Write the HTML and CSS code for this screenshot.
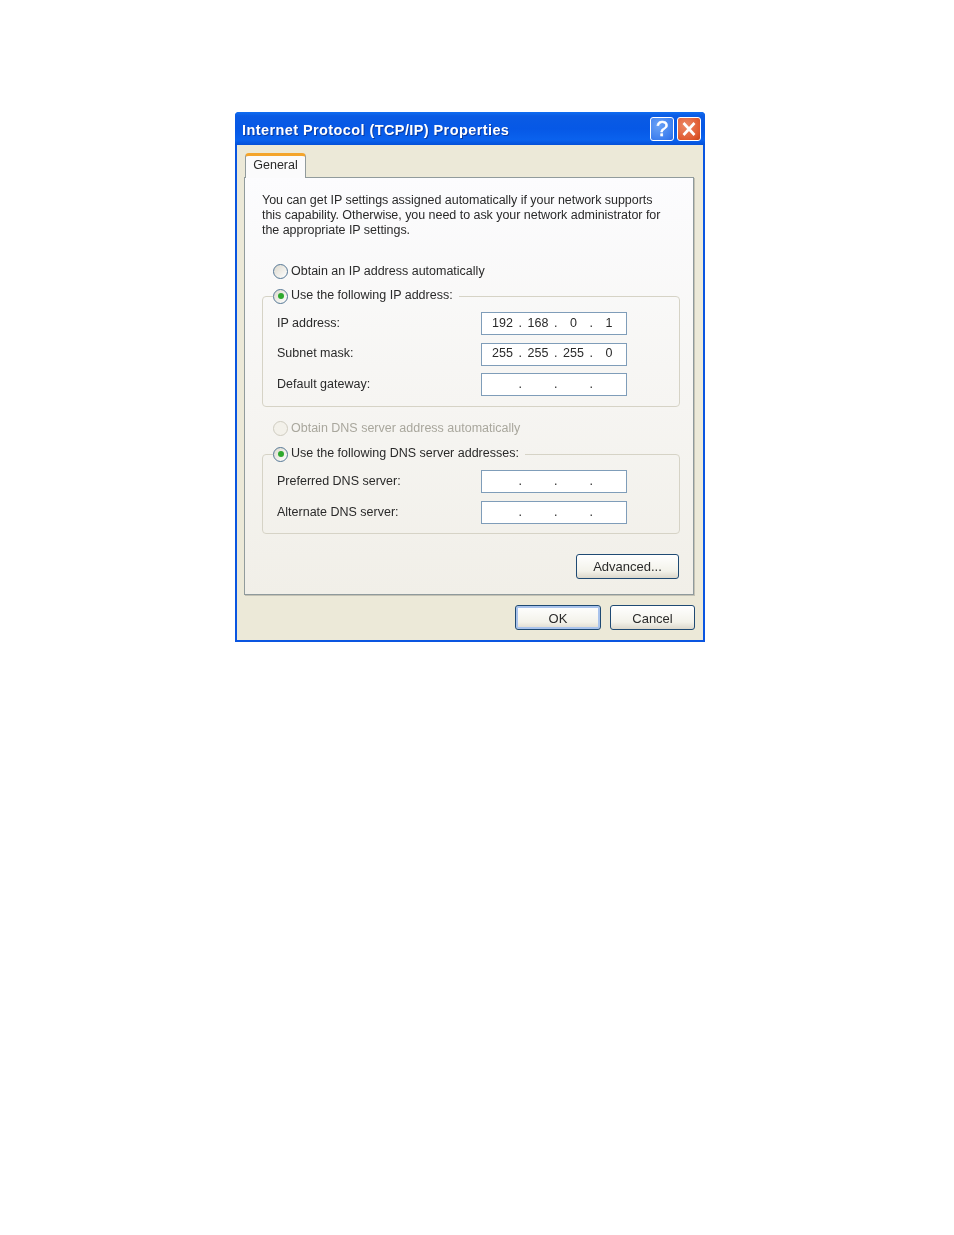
FILE: index.html
```html
<!DOCTYPE html>
<html lang="en">
<head>
<meta charset="utf-8">
<title>Internet Protocol (TCP/IP) Properties</title>
<link rel="stylesheet" href="styles.css">
</head>
<body>
<div class="window">
  <div class="titlebar">
    <span class="title">Internet Protocol (TCP/IP) Properties</span>
    <div class="title-buttons">
      <span class="tbtn help">?</span>
      <span class="tbtn close">
        <svg width="24" height="24" viewBox="0 0 24 24"><path d="M6.5 6 L17.5 18 M17.5 6 L6.5 18" stroke="#fff" stroke-width="2.6" fill="none"/></svg>
      </span>
    </div>
  </div>
  <div class="client">
    <div class="tabs"><span class="tab">General</span></div>
    <div class="panel">
      <p class="intro">You can get IP settings assigned automatically if your network supports<br>this capability. Otherwise, you need to ask your network administrator for<br>the appropriate IP settings.</p>

      <div class="option first"><span class="radio"></span><span>Obtain an IP address automatically</span></div>
      <fieldset class="group">
        <legend class="option"><span class="radio checked"></span><span class="legend-text">Use the following IP address:</span></legend>
        <div class="rows">
          <div class="row"><span class="label">IP address:</span>
            <div class="field"><span class="oct">192</span><span class="dot">.</span><span class="oct">168</span><span class="dot">.</span><span class="oct">0</span><span class="dot">.</span><span class="oct">1</span></div></div>
          <div class="row"><span class="label">Subnet mask:</span>
            <div class="field"><span class="oct">255</span><span class="dot">.</span><span class="oct">255</span><span class="dot">.</span><span class="oct">255</span><span class="dot">.</span><span class="oct">0</span></div></div>
          <div class="row"><span class="label">Default gateway:</span>
            <div class="field"><span class="oct"></span><span class="dot">.</span><span class="oct"></span><span class="dot">.</span><span class="oct"></span><span class="dot">.</span><span class="oct"></span></div></div>
        </div>
      </fieldset>

      <div class="option disabled"><span class="radio off"></span><span>Obtain DNS server address automatically</span></div>
      <fieldset class="group dns">
        <legend class="option"><span class="radio checked"></span><span class="legend-text">Use the following DNS server addresses:</span></legend>
        <div class="rows">
          <div class="row"><span class="label">Preferred DNS server:</span>
            <div class="field"><span class="oct"></span><span class="dot">.</span><span class="oct"></span><span class="dot">.</span><span class="oct"></span><span class="dot">.</span><span class="oct"></span></div></div>
          <div class="row"><span class="label">Alternate DNS server:</span>
            <div class="field"><span class="oct"></span><span class="dot">.</span><span class="oct"></span><span class="dot">.</span><span class="oct"></span><span class="dot">.</span><span class="oct"></span></div></div>
        </div>
      </fieldset>

      <div class="advanced-row"><span class="btn advanced">Advanced...</span></div>
    </div>
    <div class="actions">
      <span class="btn ok">OK</span>
      <span class="btn cancel">Cancel</span>
    </div>
  </div>
</div>
</body>
</html>
```
FILE: styles.css
```css
html, body { margin: 0; padding: 0; background: #fff; }
body { height: 1235px; overflow: hidden; font-family: "Liberation Sans", Arial, sans-serif; font-size: 12px; color: #2a2a2a; }

.window {
  width: 470px; height: 530px; margin: 112px 0 0 235px;
  display: flex; flex-direction: column;
  border-radius: 4px 4px 0 0; overflow: hidden;
  background: #0a55e0; box-sizing: border-box;
  filter: blur(0.35px);
}
.titlebar {
  height: 33px; flex: none; display: flex; align-items: center; justify-content: space-between;
  padding: 0 4px 0 7px;
  background: linear-gradient(#0f6df2 0, #0a5be4 12%, #0658e6 50%, #0a62ee 85%, #0550d8 100%);
}
.title {
  font-weight: bold; font-size: 14.5px; color: #fff; letter-spacing: 0.41px;
  text-shadow: 1px 1px 0 #0a3aa0; margin-top: 2px;
}
.title-buttons { display: flex; gap: 3px; }
.tbtn {
  width: 24px; height: 24px; box-sizing: border-box; border: 1px solid #fff; border-radius: 3px;
  display: flex; align-items: center; justify-content: center; color: #fff;
}
.tbtn svg { flex: none; margin: -1px; }
.help {
  background: radial-gradient(circle at 35% 35%, #6aa2f6, #3a7cee 75%, #2f68e0);
  font: normal 22px "Liberation Sans", sans-serif; -webkit-text-stroke: 0.5px #fff;
}
.close { background: radial-gradient(circle at 35% 35%, #ec8a68, #e05a30 70%, #c84218); }

.client {
  flex: 1; margin: 0 2px 2px; background: #ece9d8;
  padding: 8px 8px 0 7px; display: flex; flex-direction: column;
}
.tabs { height: 24px; flex: none; display: flex; position: relative; z-index: 1; padding-left: 1px; }
.tab {
  width: 61px; height: 25px; box-sizing: border-box; text-align: center; line-height: 19px; font-size: 12.5px;
  background: #fbfbfc; border: 1px solid #919b9c; border-bottom: 0; border-top: 3px solid #f4a52c; border-radius: 4px 4px 0 0;
}
.panel {
  width: 450px; height: 418px; box-sizing: border-box; flex: none;
  border: 1px solid #919b9c; border-right-color: #8f9a9c; border-bottom-color: #8f9a9c;
  box-shadow: 1px 1px 0 #c4c2b4;
  background: linear-gradient(#fcfcfe, #f1efe8);
  padding: 15px 13px 0 17px;
}
.intro { margin: 0 0 25px; line-height: 15px; font-size: 12.5px; letter-spacing: -0.04px; white-space: nowrap; }

.option { display: flex; align-items: center; gap: 3px; height: 16px; font-size: 12.5px; white-space: nowrap; }
.first { margin-left: 11px; }
.disabled { margin: 13px 0 10px 11px; color: #a9a79d; }
.radio {
  width: 15px; height: 15px; box-sizing: border-box; border-radius: 50%; flex: none;
  border: 1.5px solid #567896; background: linear-gradient(135deg, #dcd9ce, #fff);
  display: flex; align-items: center; justify-content: center;
}
.radio.checked::before { content: ""; width: 6px; height: 6px; border-radius: 50%; background: #2ea92e; }
.radio.off { border-color: #cfccc0; background: #f3f1ea; }

.group {
  margin: 9px 0 0; padding: 0 0 10px 14px; min-inline-size: 0;
  width: 418px; box-sizing: border-box;
  border: 1px solid #d6d3c6; border-radius: 4px;
}
.dns { margin-top: 0; padding-bottom: 9px; }
.group legend { padding: 0 6px 0 0; margin-left: -4px; }
.legend-text { padding-bottom: 2px; }
.rows { display: flex; flex-direction: column; gap: 7.5px; padding-top: 8px; }
.dns .rows { gap: 8px; }
.row { display: flex; align-items: center; }
.label { width: 204px; flex: none; font-size: 12.5px; padding-bottom: 2px; }
.field {
  width: 146px; height: 23px; box-sizing: border-box; background: #fff;
  border: 1px solid #7f9db9; padding: 0 0 2px 7px;
  display: flex; align-items: center; font-size: 12.5px;
}
.oct { width: 27px; text-align: center; flex: none; }
.dot { width: 8.5px; text-align: center; flex: none; }

.advanced-row { display: flex; justify-content: flex-end; margin: 20px 1px 0 0; }
.btn {
  box-sizing: border-box; height: 25px; display: flex; align-items: center; justify-content: center;
  border: 1px solid #1f4a73; border-radius: 3px; font-size: 13px;
  background: linear-gradient(#ffffff, #f3f2ea 70%, #dcd8cc);
}
.advanced { width: 103px; }
.actions { display: flex; justify-content: flex-end; gap: 9px; margin-top: 10px; }
.actions .btn { padding-top: 1px; }
.ok { width: 86px; box-shadow: inset 0 0 0 2px #a9c3ec; }
.cancel { width: 85px; }
```
